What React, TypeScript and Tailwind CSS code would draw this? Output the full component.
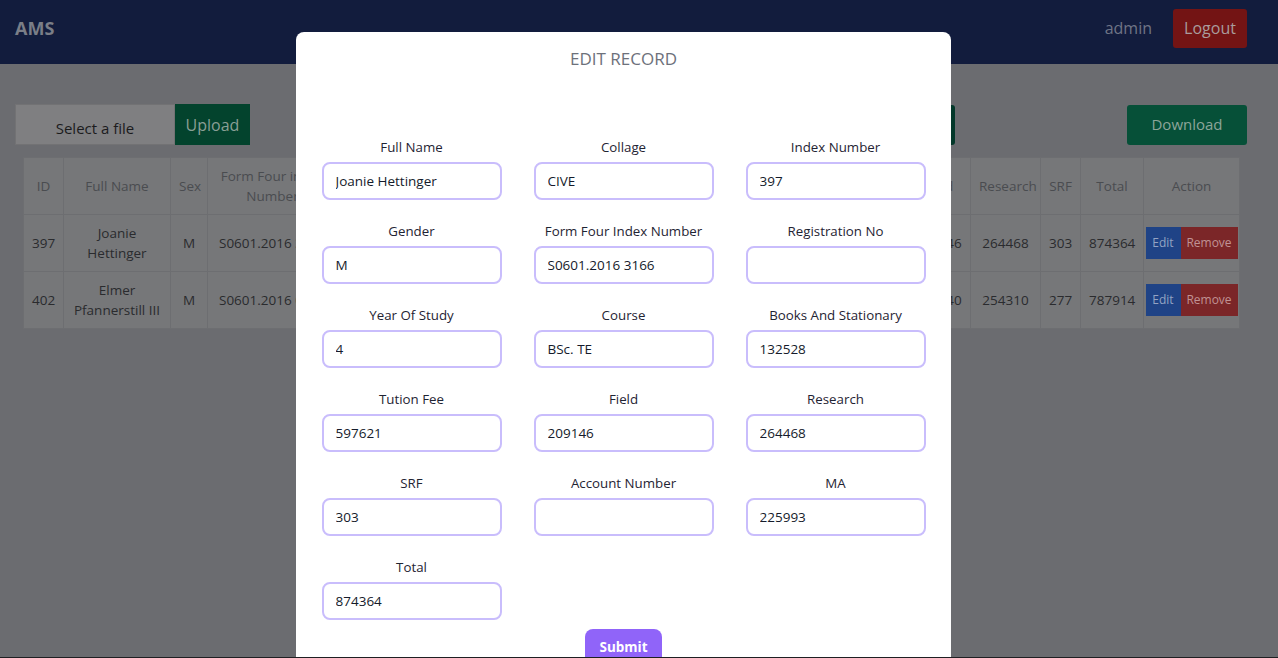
const font = { fontFamily: '"Segoe UI", "Open Sans", "Noto Sans", sans-serif' };

type Row = string[];

// columns 4..11 sit behind the modal, so they stay empty
const headers = [
  "ID",
  "Full Name",
  "Sex",
  "Form Four index Number",
  "",
  "",
  "",
  "",
  "",
  "",
  "",
  "",
  "Field",
  "Research",
  "SRF",
  "Total",
  "Action",
];

const widths = [40, 107, 37, 130, 105, 60, 70, 50, 70, 90, 64, 60, 64, 70, 40, 63, 96];

const rows: Row[] = [
  ["397", "Joanie Hettinger", "M", "S0601.2016 3166", "", "", "", "", "", "", "", "", "209146", "264468", "303", "874364"],
  ["402", "Elmer Pfannerstill III", "M", "S0601.2016 0412", "", "", "", "", "", "", "", "", "217640", "254310", "277", "787914"],
];

const fields: [string, string][] = [
  ["Full Name", "Joanie Hettinger"],
  ["Collage", "CIVE"],
  ["Index Number", "397"],
  ["Gender", "M"],
  ["Form Four Index Number", "S0601.2016 3166"],
  ["Registration No", ""],
  ["Year Of Study", "4"],
  ["Course", "BSc. TE"],
  ["Books And Stationary", "132528"],
  ["Tution Fee", "597621"],
  ["Field", "209146"],
  ["Research", "264468"],
  ["SRF", "303"],
  ["Account Number", ""],
  ["MA", "225993"],
  ["Total", "874364"],
];

const Header = () => (
  <header className="flex h-16 items-center justify-between bg-[#121c3d] pb-2 pl-[15px] pr-[31px]">
    <span className="text-[18px] font-bold text-[#7a7e87]">AMS</span>
    <div className="flex items-center gap-[21px]">
      <span className="text-[16px] text-[#6f7486]">admin</span>
      <button className="h-[39px] w-[74px] rounded-[3px] bg-[#731414] text-[16px] text-[#a99c9c]">
        Logout
      </button>
    </div>
  </header>
);

const Toolbar = () => (
  <div className="flex items-center justify-between pl-[15px] pr-[31px] pt-10">
    <div className="flex">
      <div className="flex h-[41px] w-[160px] items-center justify-center border border-[#727274] bg-[#7f7f81] pt-2 text-[15px] text-[#1b1b1d]">
        Select a file
      </div>
      <button className="h-[41px] w-[75px] bg-[#03432d] text-[16px] text-[#8a9f95]">
        Upload
      </button>
    </div>
    <div className="flex items-center gap-[172px]">
      <button className="h-[40px] w-[90px] rounded-[3px] bg-[#03382a]" />
      <button className="h-[40px] w-[120px] rounded-[3px] bg-[#065038] text-[15px] text-[#8ca59a]">
        Download
      </button>
    </div>
  </div>
);

const Table = () => (
  <div className="px-[23px] pt-3">
    <table className="table-fixed border-collapse bg-[#767779] text-center text-[13.5px] leading-5" style={{ width: 1216 }}>
      <colgroup>
        {widths.map((w, i) => (
          <col key={i} style={{ width: w }} />
        ))}
      </colgroup>
      <thead>
        <tr className="h-[57px]">
          {headers.map((h, i) => (
            <th key={i} className="border border-[#6d6e71] px-2 py-2 font-normal text-[#4a4c50]">
              {h}
            </th>
          ))}
        </tr>
      </thead>
      <tbody>
        {rows.map((r) => (
          <tr key={r[0]} className="h-[57px] text-[#2a2b2e]">
            {r.map((c, i) => (
              <td key={i} className={`border border-[#6d6e71] py-2 ${i === 3 ? "whitespace-nowrap px-1 text-left pl-[11px]" : "px-2"}`}>
                {c}
              </td>
            ))}
            <td className="border border-[#6d6e71] px-[1px]">
              <div className="flex justify-center text-[12px]">
                <span className="flex h-8 w-[35px] items-center justify-center bg-[#1f4386] text-[#93a3c3]">Edit</span>
                <span className="flex h-8 w-[57px] items-center justify-center bg-[#7b2628] text-[#c09294]">Remove</span>
              </div>
            </td>
          </tr>
        ))}
      </tbody>
    </table>
  </div>
);

const Field = ({ label, value }: { label: string; value: string }) => (
  <div className="flex flex-col items-center">
    <label className="h-5 text-[13.3px] leading-5 text-[#1f2433]">{label}</label>
    <input
      readOnly
      value={value}
      className="mt-[5px] h-[38px] w-[180px] rounded-lg border-2 border-[#c9bdfc] bg-white px-3 text-[13.5px] text-[#151b2b] outline-none"
      style={font}
    />
  </div>
);

const EditModal = () => (
  <div className="absolute inset-0 flex justify-center pr-[31px] pt-8">
    <div className="h-[640px] w-[655px] rounded-t-lg bg-white pt-[15px]">
      <h2 className="text-center text-[17px] leading-6 text-[#6d717b]">EDIT RECORD</h2>
      <div className="mt-[66px] grid grid-cols-[212px_212px_212px] justify-center gap-y-[21px]">
        {fields.map(([l, v]) => (
          <Field key={l} label={l} value={v} />
        ))}
      </div>
      <div className="mt-[9px] flex justify-center">
        <button className="h-9 w-[77px] rounded-lg bg-[#9064f9] text-[13.5px] font-bold text-white">
          Submit
        </button>
      </div>
    </div>
  </div>
);

export default function App() {
  return (
    <div className="relative h-[658px] overflow-hidden bg-[#6b6c70]" style={font}>
      <Header />
      <Toolbar />
      <Table />
      <EditModal />
      <div className="absolute bottom-0 left-0 h-px w-full bg-[#1f1f22]" />
    </div>
  );
}
